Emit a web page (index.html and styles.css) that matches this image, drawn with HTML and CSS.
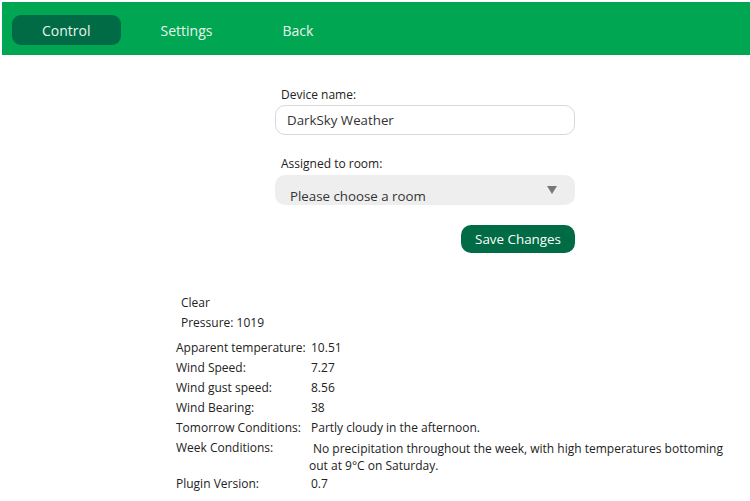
FILE: index.html
```html
<!DOCTYPE html>
<html>
<head>
<meta charset="utf-8">
<link rel="stylesheet" href="styles.css">
</head>
<body>
<div class="page">
  <nav class="topbar">
    <a class="tab active">Control</a>
    <a class="tab">Settings</a>
    <a class="tab">Back</a>
  </nav>
  <form class="form">
    <label class="label">Device name:</label>
    <div class="input">DarkSky Weather</div>
    <label class="label label-room">Assigned to room:</label>
    <div class="select"><span class="select-text">Please choose a room</span><span class="caret"></span></div>
    <div class="actions"><button type="button" class="save">Save Changes</button></div>
  </form>
  <section class="info">
    <div class="summary">Clear</div>
    <div class="summary">Pressure: 1019</div>
    <table class="details">
      <tr><td class="k">Apparent temperature:</td><td class="v">10.51</td></tr>
      <tr><td class="k">Wind Speed:</td><td class="v">7.27</td></tr>
      <tr><td class="k">Wind gust speed:</td><td class="v">8.56</td></tr>
      <tr><td class="k">Wind Bearing:</td><td class="v">38</td></tr>
      <tr><td class="k">Tomorrow Conditions:</td><td class="v">Partly cloudy in the afternoon.</td></tr>
      <tr><td class="k">Week Conditions:</td><td class="v wide">No precipitation throughout the week, with high temperatures bottoming out at 9°C on Saturday.</td></tr>
      <tr><td class="k">Plugin Version:</td><td class="v">0.7</td></tr>
    </table>
  </section>
</div>
</body>
</html>
```
FILE: styles.css
```css
html, body {
  margin: 0;
  padding: 0;
  background: #fff;
}
body {
  font-family: "Open Sans", "Noto Sans", sans-serif;
  color: #222;
}
.page {
  padding: 2px 0 0 2px;
}
.topbar {
  background: #00a651;
  height: 53px;
  display: flex;
  align-items: flex-start;
  gap: 10px;
  padding-left: 10px;
  box-sizing: border-box;
  padding-top: 13px;
}
.tab {
  color: #e8f5ee;
  font-size: 14px;
  height: 30px;
  line-height: 31px;
  padding: 0 30px;
  border-radius: 9px;
}
.tab.active {
  background: #006b45;
}
.form {
  width: 300px;
  margin: 31px 0 0 273px;
  display: flex;
  flex-direction: column;
}
.label {
  font-size: 12px;
  line-height: 17px;
  padding-left: 6px;
  margin-bottom: 2px;
}
.label-room {
  margin-top: 20px;
  margin-bottom: 3px;
}
.input {
  height: 28px;
  border: 1px solid #d8d8d8;
  border-radius: 10px;
  font-size: 13.3px;
  line-height: 28px;
  padding-left: 11px;
  color: #333;
}
.select {
  height: 30px;
  background: #eeeeee;
  border-radius: 10px;
  position: relative;
  font-size: 13.3px;
  color: #333;
  padding-left: 15px;
  overflow: hidden;
}
.select-text {
  display: block;
  line-height: 20px;
  padding-top: 11px;
}
.caret {
  position: absolute;
  right: 18px;
  top: 11px;
  width: 0;
  height: 0;
  border-left: 5.5px solid transparent;
  border-right: 5.5px solid transparent;
  border-top: 8px solid #777;
}
.actions {
  display: flex;
  justify-content: flex-end;
  margin-top: 20px;
}
.save {
  background: #006b45;
  color: #fff;
  border: none;
  border-radius: 10px;
  font-family: "Open Sans", "Noto Sans", sans-serif;
  font-size: 13.4px;
  height: 28px;
  padding: 0 14px;
  line-height: 28px;
}
.info {
  margin: 40px 0 0 172px;
  font-size: 12px;
}
.summary {
  line-height: 20px;
  padding-left: 7px;
}
.details {
  border-collapse: collapse;
  margin-top: 5px;
  width: 556px;
}
.details td {
  line-height: 20px;
  vertical-align: top;
}
.details td.k {
  width: 133px;
  padding: 0 0 0 2px;
  white-space: nowrap;
}
.details td.v {
  line-height: 18px;
  padding: 1px 0;
  text-indent: 2px;
}
.details td.v.wide {
  text-indent: 4px;
  line-height: 17px;
  padding: 2px 0 0;
}
```
